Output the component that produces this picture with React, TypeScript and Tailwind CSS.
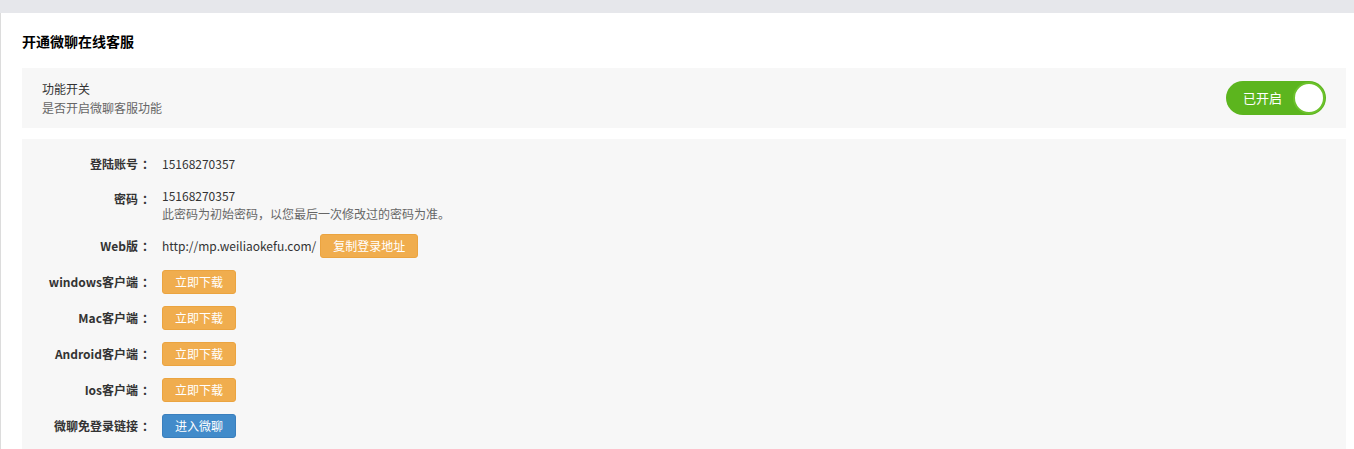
const font = "font-['Noto_Sans_CJK_SC','Noto_Sans',sans-serif]";

function Row({ label, children, className = "" }: { label: string; children: React.ReactNode; className?: string }) {
  return (
    <div className={`flex items-start ${className}`}>
      <div className="w-[132px] shrink-0 text-right text-[12px] font-bold leading-[24px] text-[#333]">
        {label}
        <span className="ml-1">：</span>
      </div>
      <div className="ml-2 text-[12px] leading-[24px] text-[#333]">{children}</div>
    </div>
  );
}

function Btn({ children, blue = false }: { children: React.ReactNode; blue?: boolean }) {
  return (
    <button
      className={`h-6 w-[74px] rounded-[3px] border text-[12px] leading-[22px] text-white ${
        blue ? "border-[#3a7fbd] bg-[#428bca]" : "border-[#eba440] bg-[#f0ad4e]"
      }`}
    >
      {children}
    </button>
  );
}

export default function App() {
  return (
    <div className={`h-[449px] w-[1354px] overflow-hidden bg-[#e6e7eb] pt-[13px] ${font}`}>
      <div className="h-full border-l border-[#dcdcdc] bg-white pl-[21px] pr-2">
        <h2 className="pt-[19px] text-[14px] font-bold leading-[18px] text-black">开通微聊在线客服</h2>

        <div className="mt-[18px] flex h-[60px] items-center justify-between bg-[#f7f7f7] pl-5 pr-5">
          <div>
            <div className="text-[12px] leading-[19px] text-[#333]">功能开关</div>
            <div className="text-[12px] leading-[19px] text-[#666]">是否开启微聊客服功能</div>
          </div>
          <div className="flex h-[34px] w-[100px] items-center justify-between rounded-full bg-[#5cb51e] pl-[17px] pr-[1px]">
            <span className="text-[13px] text-white">已开启</span>
            <span className="h-[32px] w-[32px] rounded-full border-2 border-[#6cc22c] bg-white" />
          </div>
        </div>

        <div className="mt-[11px] h-[320px] bg-[#f7f7f7] pt-[13px]">
          <Row label="登陆账号">15168270357</Row>
          <Row label="密码" className="mt-[11px]">
            <div className="leading-[18px]">15168270357</div>
            <div className="leading-[18px] text-[#666]">此密码为初始密码，以您最后一次修改过的密码为准。</div>
          </Row>
          <Row label="Web版" className="mt-[11px]">
            <span className="flex items-center gap-1">
              http://mp.weiliaokefu.com/
              <button className="h-6 rounded-[3px] border border-[#eba440] bg-[#f0ad4e] px-[12px] text-[12px] leading-[22px] text-white">
                复制登录地址
              </button>
            </span>
          </Row>
          <Row label="windows客户端" className="mt-3">
            <Btn>立即下载</Btn>
          </Row>
          <Row label="Mac客户端" className="mt-3">
            <Btn>立即下载</Btn>
          </Row>
          <Row label="Android客户端" className="mt-3">
            <Btn>立即下载</Btn>
          </Row>
          <Row label="Ios客户端" className="mt-3">
            <Btn>立即下载</Btn>
          </Row>
          <Row label="微聊免登录链接" className="mt-3">
            <Btn blue>进入微聊</Btn>
          </Row>
        </div>
      </div>
    </div>
  );
}
